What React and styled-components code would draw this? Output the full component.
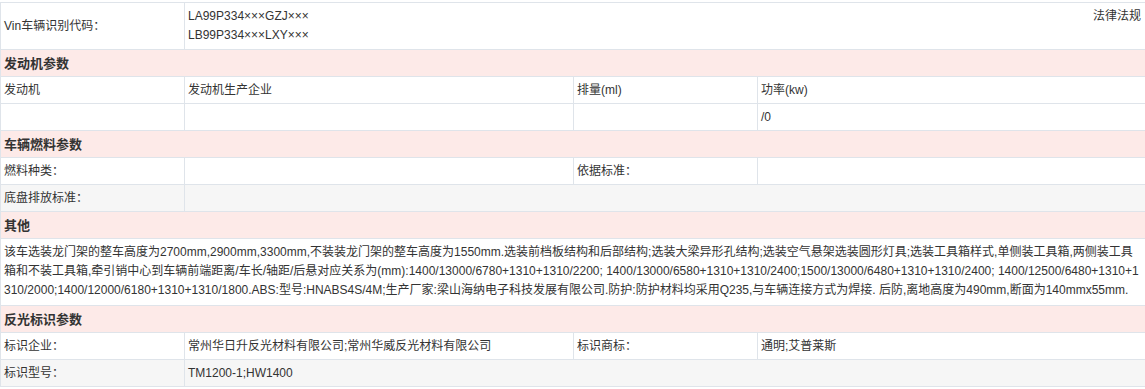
import React from "react";
import styled, { createGlobalStyle } from "styled-components";

const line = "#dfe4ea";

const Global = createGlobalStyle`
  html, body {
    margin: 0;
    padding: 0;
    background: #ffffff;
    overflow: hidden;
  }
  body {
    font-family: "Liberation Sans", "Noto Sans CJK SC", sans-serif;
    font-size: 12px;
    color: #333333;
  }
`;

const Sheet = styled.div`
  display: grid;
  grid-template-columns: 184px 389px 184px 388px;
  width: 1146px;
  margin-top: 2px;
  box-sizing: border-box;
  border-top: 1px solid ${line};
  border-left: 1px solid ${line};
`;

const Cell = styled.div`
  grid-column: span ${(p) => p.$span || 1};
  display: flex;
  align-items: center;
  box-sizing: border-box;
  min-height: 27px;
  padding: 0 3px;
  border-right: 1px solid ${line};
  border-bottom: 1px solid ${line};
  background: ${(p) => (p.$shade ? "#f6f6f6" : "#ffffff")};
  line-height: 19px;
  white-space: nowrap;
`;

const Section = styled(Cell)`
  grid-column: span 4;
  background: #fdeae8;
  font-size: 13px;
  font-weight: bold;
`;

const VinCell = styled(Cell)`
  padding: 4px 4px 4px 3px;
`;

const VinList = styled.div`
  display: flex;
  flex-direction: column;
`;

const Law = styled.span`
  align-self: flex-start;
  margin-left: auto;
`;

const Note = styled(Cell)`
  grid-column: span 4;
  display: block;
  padding: 4px 3px 5px 3px;
  white-space: normal;
  word-break: break-all;
`;

const note =
  "该车选装龙门架的整车高度为2700mm,2900mm,3300mm,不装装龙门架的整车高度为1550mm.选装前档板结构和后部结构;选装大梁异形孔结构;选装空气悬架选装圆形灯具;选装工具箱样式,单侧装工具箱,两侧装工具箱和不装工具箱,牵引销中心到车辆前端距离/车长/轴距/后悬对应关系为(mm):1400/13000/6780+1310+1310/2200; 1400/13000/6580+1310+1310/2400;1500/13000/6480+1310+1310/2400; 1400/12500/6480+1310+1310/2000;1400/12000/6180+1310+1310/1800.ABS:型号:HNABS4S/4M;生产厂家:梁山海纳电子科技发展有限公司.防护:防护材料均采用Q235,与车辆连接方式为焊接. 后防,离地高度为490mm,断面为140mmx55mm.";

const App = () => {
  return (
    <>
      <Global />
      <Sheet>
        <Cell>Vin车辆识别代码：</Cell>
        <VinCell $span={3}>
          <VinList>
            <span>LA99P334×××GZJ×××</span>
            <span>LB99P334×××LXY×××</span>
          </VinList>
          <Law>法律法规</Law>
        </VinCell>

        <Section>发动机参数</Section>
        <Cell>发动机</Cell>
        <Cell>发动机生产企业</Cell>
        <Cell>排量(ml)</Cell>
        <Cell>功率(kw)</Cell>
        <Cell />
        <Cell />
        <Cell />
        <Cell>/0</Cell>

        <Section>车辆燃料参数</Section>
        <Cell>燃料种类：</Cell>
        <Cell />
        <Cell>依据标准：</Cell>
        <Cell />
        <Cell $shade>底盘排放标准：</Cell>
        <Cell $shade $span={3} />

        <Section>其他</Section>
        <Note>{note}</Note>

        <Section>反光标识参数</Section>
        <Cell>标识企业：</Cell>
        <Cell>常州华日升反光材料有限公司;常州华威反光材料有限公司</Cell>
        <Cell>标识商标：</Cell>
        <Cell>通明;艾普莱斯</Cell>
        <Cell $shade>标识型号：</Cell>
        <Cell $shade $span={3}>TM1200-1;HW1400</Cell>
      </Sheet>
    </>
  );
};

export default App;
